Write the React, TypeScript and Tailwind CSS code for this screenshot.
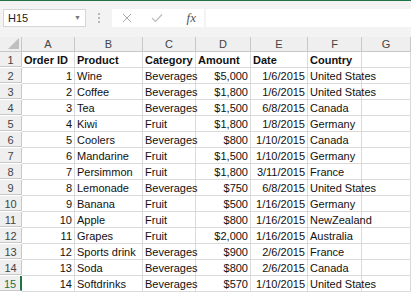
import React from "react";

const rows: [number, string, string, string, string, string][] = [
  [1, "Wine", "Beverages", "$5,000", "1/6/2015", "United States"],
  [2, "Coffee", "Beverages", "$1,800", "1/6/2015", "United States"],
  [3, "Tea", "Beverages", "$1,500", "6/8/2015", "Canada"],
  [4, "Kiwi", "Fruit", "$1,800", "1/8/2015", "Germany"],
  [5, "Coolers", "Beverages", "$800", "1/10/2015", "Canada"],
  [6, "Mandarine", "Fruit", "$1,500", "1/10/2015", "Germany"],
  [7, "Persimmon", "Fruit", "$1,800", "3/11/2015", "France"],
  [8, "Lemonade", "Beverages", "$750", "6/8/2015", "United States"],
  [9, "Banana", "Fruit", "$500", "1/16/2015", "Germany"],
  [10, "Apple", "Fruit", "$800", "1/16/2015", "NewZealand"],
  [11, "Grapes", "Fruit", "$2,000", "1/16/2015", "Australia"],
  [12, "Sports drink", "Beverages", "$900", "2/6/2015", "France"],
  [13, "Soda", "Beverages", "$800", "2/6/2015", "Canada"],
  [14, "Softdrinks", "Beverages", "$570", "1/10/2015", "United States"],
];

const cols = "grid grid-cols-[22px_53px_68px_53px_55px_57px_54px_1fr]";
const cell = "h-4 border-r border-b border-[#dadada] px-[2px] leading-[16px] whitespace-nowrap overflow-visible text-[#111]";
const headCell = "h-[15px] border-r border-b border-[#c8c8c8] bg-[#efefef] text-center leading-[15px] text-[#444]";

export default function App() {
  return (
    <div
      className="w-[411px] h-[293px] overflow-hidden bg-white text-[11px]"
      style={{ fontFamily: '"Liberation Sans", Arial, sans-serif' }}
    >
      {/* formula bar */}
      <div className="h-[37px] border-t border-[#217346] bg-[#f3f3f3] flex items-center gap-0 pb-[2px]">
        <div className="ml-[3px] w-[83px] h-[18px] bg-white border border-[#d6d6d6] flex items-center justify-between px-[4px]">
          <span className="text-[#222]">H15</span>
          <span className="text-[7px] text-[#777]">▼</span>
        </div>
        <div className="ml-[12px] flex flex-col gap-[2px]">
          <div className="w-[2px] h-[2px] bg-[#b8b8b8]" />
          <div className="w-[2px] h-[2px] bg-[#b8b8b8]" />
          <div className="w-[2px] h-[2px] bg-[#b8b8b8]" />
        </div>
        <div className="ml-[12px] w-[92px] h-[18px] bg-white flex items-center text-[#999]">
          <svg width="10" height="10" viewBox="0 0 10 10" className="ml-[10px]">
            <path d="M1 1L9 9M9 1L1 9" stroke="#aaa" strokeWidth="1" />
          </svg>
          <svg width="12" height="10" viewBox="0 0 12 10" className="ml-[19px]">
            <path d="M1 5L4.5 8.5L11 1.5" stroke="#bbb" strokeWidth="1.2" fill="none" />
          </svg>
          <span
            className="ml-auto mr-[8px] italic text-[13px] text-[#555]"
            style={{ fontFamily: '"Liberation Serif", serif' }}
          >
            fx
          </span>
        </div>
        <div className="ml-[2px] flex-1 h-[18px] bg-white" />
      </div>

      {/* column headers */}
      <div className={cols}>
        <div className={`${headCell} relative`}>
          <svg width="11" height="11" viewBox="0 0 11 11" className="absolute right-[2px] bottom-[2px]">
            <path d="M11 0V11H0Z" fill="#bfbfbf" />
          </svg>
        </div>
        {["A", "B", "C", "D", "E", "F", "G"].map((c) => (
          <div key={c} className={headCell}>
            {c}
          </div>
        ))}
      </div>

      {/* header row */}
      <div className={cols}>
        <div className={`${headCell} h-4 leading-[16px]`}>1</div>
        <div className={`${cell} font-bold`}>Order ID</div>
        <div className={`${cell} font-bold`}>Product</div>
        <div className={`${cell} font-bold`}>Category</div>
        <div className={`${cell} font-bold`}>Amount</div>
        <div className={`${cell} font-bold`}>Date</div>
        <div className={`${cell} font-bold`}>Country</div>
        <div className={cell} />
      </div>

      {rows.map((r, i) => {
        const last = i === rows.length - 1;
        return (
          <div key={r[0]} className={cols}>
            <div
              className={
                last
                  ? `${headCell} h-4 leading-[16px] bg-[#e2e2e2] text-[#217346] border-r-2 border-r-[#217346]`
                  : `${headCell} h-4 leading-[16px]`
              }
            >
              {i + 2}
            </div>
            <div className={`${cell} text-right`}>{r[0]}</div>
            <div className={cell}>{r[1]}</div>
            <div className={cell}>{r[2]}</div>
            <div className={`${cell} text-right`}>{r[3]}</div>
            <div className={`${cell} text-right`}>{r[4]}</div>
            <div className={cell}>{r[5]}</div>
            <div className={cell} />
          </div>
        );
      })}
    </div>
  );
}
